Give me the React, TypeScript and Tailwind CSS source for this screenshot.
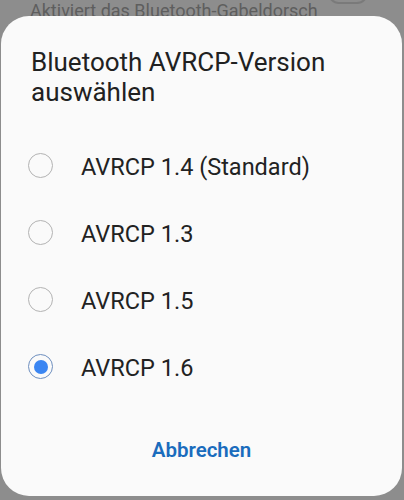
import React from 'react';

const options = [
  { id: '14', label: 'AVRCP 1.4 (Standard)' },
  { id: '13', label: 'AVRCP 1.3' },
  { id: '15', label: 'AVRCP 1.5' },
  { id: '16', label: 'AVRCP 1.6' },
];

function Radio({ checked }: { checked: boolean }) {
  return checked ? (
    <div className="w-[25px] h-[25px] rounded-full border-[1.5px] border-[#6e8fbf] flex items-center justify-center shrink-0">
      <div className="w-[14px] h-[14px] rounded-full bg-[#3b86f2]" />
    </div>
  ) : (
    <div className="w-[25px] h-[25px] rounded-full border-[1.5px] border-[#b3b3b3] shrink-0" />
  );
}

export default function App() {
  const [selected, setSelected] = React.useState('16');

  return (
    <div className="w-[404px] h-[500px] bg-[#8d8d8d] overflow-hidden font-['Roboto',sans-serif]">
      {/* settings row behind the dim */}
      <div className="h-[16px] flex items-end pl-[30px] overflow-hidden">
        <p className="w-[298px] text-[18px] leading-[20px] -mb-[5px] text-[#5e5e5e] whitespace-nowrap">Aktiviert das Bluetooth-Gabeldorsch</p>
        <div className="w-[40px] h-[22px] rounded-full border-2 border-[#7a7a7a] mb-[12px] shrink-0" />
      </div>

      <div className="ml-[1px] w-[401px] h-[480px] bg-[#fafafa] rounded-[28px] flex flex-col">
        <h1 className="pt-[31px] px-[30px] text-[26px] leading-[30px] text-[#212121] font-normal">
          Bluetooth AVRCP-Version
          <br />
          auswählen
        </h1>

        <ul className="mt-[25px] flex flex-col">
          {options.map((o) => (
            <li
              key={o.id}
              onClick={() => setSelected(o.id)}
              className="h-[67px] flex items-center pl-[27px] gap-[28px] cursor-pointer"
            >
              <Radio checked={selected === o.id} />
              <span className="text-[23.5px] leading-[67px] text-[#222] mt-[4px]">{o.label}</span>
            </li>
          ))}
        </ul>

        <div className="flex-1 flex items-center justify-center pt-[4px]">
          <button className="text-[20.5px] font-semibold text-[#1a6cbd]">Abbrechen</button>
        </div>
      </div>
    </div>
  );
}
